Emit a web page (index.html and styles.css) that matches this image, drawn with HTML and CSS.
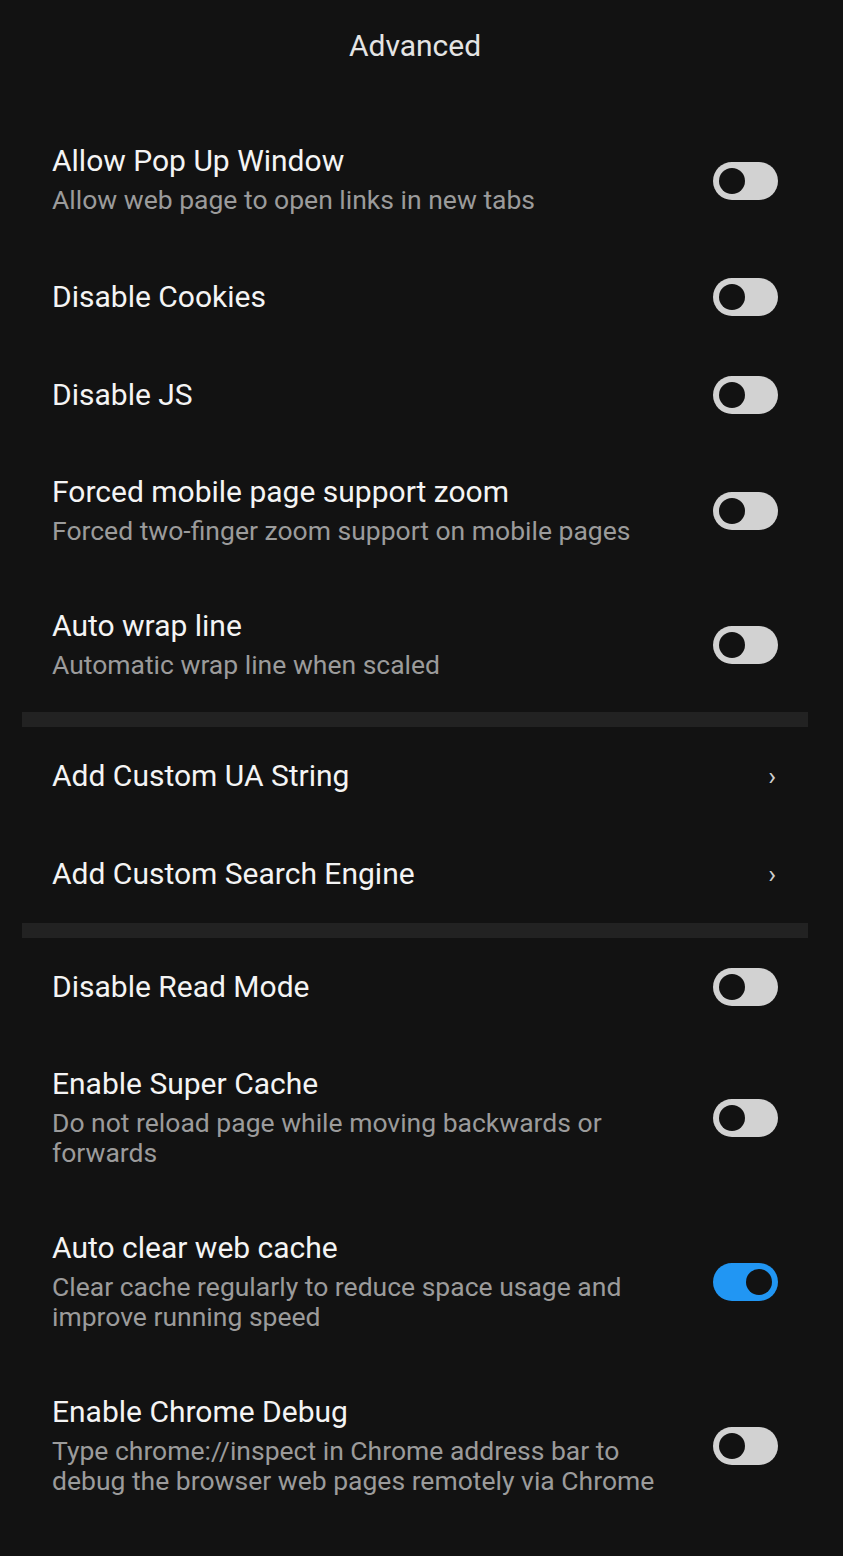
FILE: index.html
```html
<!DOCTYPE html>
<html lang="en">
<head>
    <meta charset="UTF-8">
    <meta name="viewport" content="width=device-width, initial-scale=1.0">
    <link rel="stylesheet" href="styles.css">
    <title>Advanced</title>
</head>
<body>
    <div class="page">
        <header class="topbar">
            <h1>Advanced</h1>
        </header>
        <main class="settings">
            <section class="group">
                <div class="row">
                    <div class="text">
                        <p class="label">Allow Pop Up Window</p>
                        <p class="hint">Allow web page to open links in new tabs</p>
                    </div>
                    <span class="switch"></span>
                </div>
                <div class="row">
                    <div class="text">
                        <p class="label">Disable Cookies</p>
                    </div>
                    <span class="switch"></span>
                </div>
                <div class="row">
                    <div class="text">
                        <p class="label">Disable JS</p>
                    </div>
                    <span class="switch"></span>
                </div>
                <div class="row">
                    <div class="text">
                        <p class="label">Forced mobile page support zoom</p>
                        <p class="hint">Forced two-finger zoom support on mobile pages</p>
                    </div>
                    <span class="switch"></span>
                </div>
                <div class="row">
                    <div class="text">
                        <p class="label">Auto wrap line</p>
                        <p class="hint">Automatic wrap line when scaled</p>
                    </div>
                    <span class="switch"></span>
                </div>
            </section>
            <div class="divider"></div>
            <section class="group">
                <div class="row">
                    <div class="text">
                        <p class="label">Add Custom UA String</p>
                    </div>
                    <span class="chevron">&rsaquo;</span>
                </div>
                <div class="row">
                    <div class="text">
                        <p class="label">Add Custom Search Engine</p>
                    </div>
                    <span class="chevron">&rsaquo;</span>
                </div>
            </section>
            <div class="divider"></div>
            <section class="group">
                <div class="row">
                    <div class="text">
                        <p class="label">Disable Read Mode</p>
                    </div>
                    <span class="switch"></span>
                </div>
                <div class="row">
                    <div class="text">
                        <p class="label">Enable Super Cache</p>
                        <p class="hint">Do not reload page while moving backwards or forwards</p>
                    </div>
                    <span class="switch"></span>
                </div>
                <div class="row">
                    <div class="text">
                        <p class="label">Auto clear web cache</p>
                        <p class="hint">Clear cache regularly to reduce space usage and improve running speed</p>
                    </div>
                    <span class="switch on"></span>
                </div>
                <div class="row">
                    <div class="text">
                        <p class="label">Enable Chrome Debug</p>
                        <p class="hint">Type chrome://inspect in Chrome address bar to debug the browser web pages remotely via Chrome</p>
                    </div>
                    <span class="switch"></span>
                </div>
            </section>
        </main>
    </div>
</body>
</html>
```

FILE: styles.css
```css
*, ::after, ::before{
    margin: 0;
    padding: 0;
    box-sizing: border-box;
}
body{
    background-color: #121212;
    color: #f2f2f2;
    font-family: Roboto, 'Noto Sans', sans-serif;
    min-height: 100vh;
}
.page{
    width: 786px;
    margin-left: 22px;
}
.topbar{
    height: 92px;
    display: flex;
    justify-content: center;
    align-items: center;
    h1{
        font-size: 30px;
        line-height: 34px;
        font-weight: 400;
        color: #e4e4e4;
    }
}
.settings{
    padding-top: 21px;
}
.row{
    display: flex;
    align-items: center;
    justify-content: space-between;
    gap: 40px;
    padding: 30px;
    .text{
        display: flex;
        flex-direction: column;
        justify-content: center;
        gap: 8px;
        flex: 1;
        min-height: 38px;
        &:has(.hint){
            padding: 2px 0;
        }
    }
    .label{
        font-size: 30px;
        line-height: 32px;
        color: #f4f4f4;
    }
    .hint{
        font-size: 26.5px;
        line-height: 30px;
        color: #9b9b9b;
    }
}
.group:first-child .row:first-child .text{
    padding-bottom: 3px;
}
.switch{
    flex: none;
    width: 65px;
    height: 38px;
    border-radius: 19px;
    background-color: #d2d2d2;
    display: flex;
    align-items: center;
    padding: 0 6px;
    &::before{
        content: '';
        width: 26px;
        height: 26px;
        border-radius: 50%;
        background-color: #121212;
    }
    &.on{
        background-color: #2196f3;
        justify-content: flex-end;
    }
}
.chevron{
    font-size: 26px;
    line-height: 32px;
    color: #cfcfcf;
    margin-right: 2px;
}
.divider{
    height: 15px;
    background-color: #222222;
}
```
